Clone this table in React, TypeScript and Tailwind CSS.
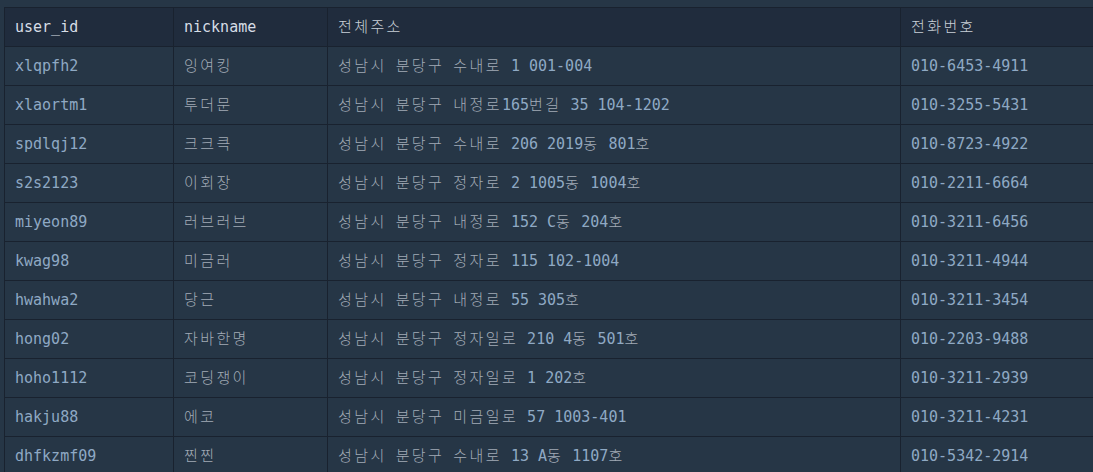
const rows = [
  ['xlqpfh2', '잉여킹', '성남시 분당구 수내로 1 001-004', '010-6453-4911'],
  ['xlaortm1', '투더문', '성남시 분당구 내정로165번길 35 104-1202', '010-3255-5431'],
  ['spdlqj12', '크크큭', '성남시 분당구 수내로 206 2019동 801호', '010-8723-4922'],
  ['s2s2123', '이회장', '성남시 분당구 정자로 2 1005동 1004호', '010-2211-6664'],
  ['miyeon89', '러브러브', '성남시 분당구 내정로 152 C동 204호', '010-3211-6456'],
  ['kwag98', '미금러', '성남시 분당구 정자로 115 102-1004', '010-3211-4944'],
  ['hwahwa2', '당근', '성남시 분당구 내정로 55 305호', '010-3211-3454'],
  ['hong02', '자바한명', '성남시 분당구 정자일로 210 4동 501호', '010-2203-9488'],
  ['hoho1112', '코딩쟁이', '성남시 분당구 정자일로 1 202호', '010-3211-2939'],
  ['hakju88', '에코', '성남시 분당구 미금일로 57 1003-401', '010-3211-4231'],
  ['dhfkzmf09', '찐찐', '성남시 분당구 수내로 13 A동 1107호', '010-5342-2914'],
];

const headers = ['user_id', 'nickname', '전체주소', '전화번호'];

// hangul runs get their own colour + spacing (the CJK fallback looks wider/lighter)
function Mixed({ text, ko }: { text: string; ko: string }) {
  const parts = text.split(/([\uAC00-\uD7A3]+)/);
  return (
    <>
      {parts.map((p, i) =>
        /[\uAC00-\uD7A3]/.test(p) ? (
          <span key={i} className={`tracking-[2.4px] font-light ${ko}`}>
            {p}
          </span>
        ) : (
          <span key={i}>{p}</span>
        )
      )}
    </>
  );
}

export default function App() {
  return (
    <div
      className="w-[1093px] h-[472px] overflow-hidden bg-[#263646] pt-[7px] pl-[4px]"
      style={{ fontFamily: '"DejaVu Sans Mono", "Noto Sans CJK KR", monospace' }}
    >
      <table className="w-[1100px] border-collapse table-fixed text-[15px]">
        <colgroup>
          <col className="w-[169px]" />
          <col className="w-[154px]" />
          <col className="w-[573px]" />
          <col />
        </colgroup>
        <thead>
          <tr className="bg-[#202c3d]">
            {headers.map((h) => (
              <th
                key={h}
                className="h-[39px] px-[10px] text-left font-normal text-[#d6dde6] border border-[#19222f] whitespace-nowrap"
              >
                <Mixed text={h} ko="text-[#c9d0d8]" />
              </th>
            ))}
          </tr>
        </thead>
        <tbody>
          {rows.map((r) => (
            <tr key={r[0]}>
              {r.map((c, i) => (
                <td
                  key={i}
                  className="h-[39px] px-[10px] text-[#8fa9c4] border border-[#19222f] whitespace-nowrap"
                >
                  <Mixed text={c} ko="text-[#a2abb6]" />
                </td>
              ))}
            </tr>
          ))}
        </tbody>
      </table>
    </div>
  );
}
